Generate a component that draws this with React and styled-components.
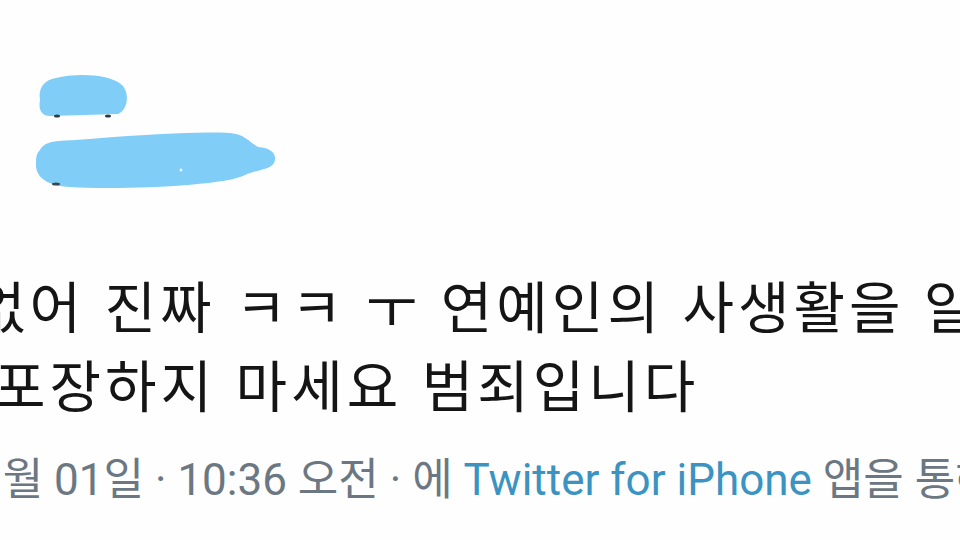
import styled, { createGlobalStyle } from "styled-components";

const GlobalStyle = createGlobalStyle`
  html, body {
    margin: 0;
    padding: 0;
    background: #ffffff;
  }

  #root {
    width: 960px;
    height: 540px;
    overflow: hidden;
  }
`;

const Tweet = styled.article`
  width: 960px;
  height: 540px;
  overflow: hidden;
  display: flex;
  flex-direction: column;
  background: #fefefe;
`;

const Header = styled.header`
  padding-top: 60px;
  height: 140px;
`;

const Redaction = styled.svg`
  display: block;
  width: 300px;
  height: 140px;
`;

const Body = styled.div`
  margin-top: 64px;
  display: flex;
  flex-direction: column;
  font-family: "Noto Sans CJK KR", "Noto Sans", sans-serif;
  font-size: 56px;
  line-height: 79px;
  letter-spacing: 4px;
  word-spacing: 3px;
  color: #151515;
`;

const Line = styled.div`
  white-space: nowrap;
  margin-left: ${(props) => props.$shift}px;
`;

const Meta = styled.div`
  margin-top: 33px;
  margin-left: ${(props) => props.$shift}px;
  white-space: nowrap;
  font-family: Roboto, "Noto Sans CJK KR", sans-serif;
  font-size: 44px;
  line-height: 50px;
  color: #6b7782;
`;

const Source = styled.span`
  color: #3b93c2;
`;

function RedactedName() {
  return (
    <Redaction viewBox="0 0 300 140">
      <path
        d="M40 40 C38 28 44 20 56 18 C76 13 110 14 122 25 C130 33 128 50 118 54 L50 56 C42 56 38 50 40 40 Z"
        fill="#80cdf7"
      />
      <ellipse cx="57" cy="56" rx="3" ry="1.5" fill="#2f3b44" />
      <ellipse cx="108" cy="56" rx="3" ry="1.5" fill="#2f3b44" />
      <path
        d="M40 90 C45 80 60 81 75 80 C130 76 190 71 230 73 C245 74 250 83 258 87 C272 88 278 95 274 103 C270 110 255 110 245 115 C225 126 120 130 70 127 C48 126 35 118 36 103 C36 96 37 93 40 90 Z"
        fill="#80cdf7"
      />
      <ellipse cx="56" cy="124" rx="4" ry="1.5" fill="#3a4650" />
      <circle cx="181" cy="110" r="1.5" fill="#e8f6ff" />
    </Redaction>
  );
}

export default function App() {
  return (
    <>
      <GlobalStyle />
      <Tweet>
        <Header>
          <RedactedName />
        </Header>
        <Body>
          <Line $shift={-26}>없어 진짜 ㅋㅋ ㅜ 연예인의 사생활을 알고</Line>
          <Line $shift={-6}>포장하지 마세요 범죄입니다</Line>
        </Body>
        <Meta $shift={-22}>
          1월 01일 · 10:36 오전 · 에 <Source>Twitter for iPhone</Source> 앱을
          통해
        </Meta>
      </Tweet>
    </>
  );
}
